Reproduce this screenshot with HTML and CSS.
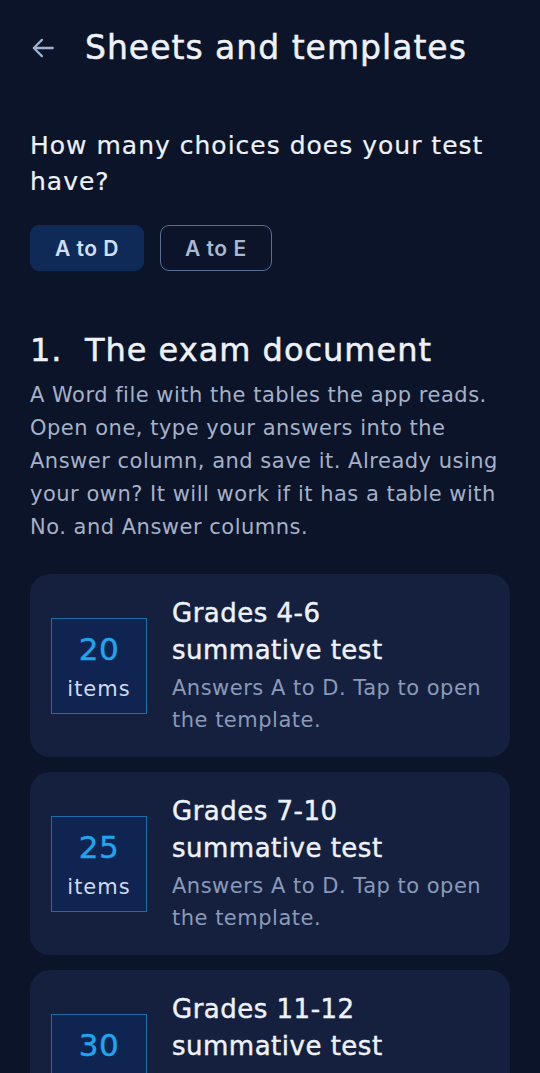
FILE: index.html
```html
<!DOCTYPE html>
<html lang="en">
<head>
<meta charset="utf-8">
<title>Sheets and templates</title>
<link rel="stylesheet" href="styles.css">
</head>
<body>
<div class="page">
  <header class="topbar">
    <svg class="back" viewBox="0 0 24 24" width="26" height="26" aria-hidden="true">
      <path d="M21 12H4M11 4.5L3.5 12 11 19.5" fill="none" stroke="currentColor" stroke-width="2.1" stroke-linecap="round" stroke-linejoin="round"/>
    </svg>
    <h1 class="title">Sheets and templates</h1>
  </header>

  <p class="question">How many choices does your test have?</p>
  <div class="choices">
    <button class="chip chip-active">A to D</button>
    <button class="chip chip-outline">A to E</button>
  </div>

  <h2 class="section">1.&nbsp; The exam document</h2>
  <p class="desc">A Word file with the tables the app reads. Open one, type your answers into the Answer column, and save it. Already using your own? It will work if it has a table with No. and Answer columns.</p>

  <div class="cards">
    <div class="card">
      <div class="badge"><span class="num">20</span><span class="unit">items</span></div>
      <div class="info">
        <div class="card-title">Grades 4-6<br>summative test</div>
        <div class="card-sub">Answers A to D. Tap to open the template.</div>
      </div>
    </div>
    <div class="card">
      <div class="badge"><span class="num">25</span><span class="unit">items</span></div>
      <div class="info">
        <div class="card-title">Grades 7-10<br>summative test</div>
        <div class="card-sub">Answers A to D. Tap to open the template.</div>
      </div>
    </div>
    <div class="card">
      <div class="badge"><span class="num">30</span><span class="unit">items</span></div>
      <div class="info">
        <div class="card-title">Grades 11-12<br>summative test</div>
        <div class="card-sub">Answers A to D. Tap to open the template.</div>
      </div>
    </div>
  </div>
</div>
</body>
</html>
```

FILE: styles.css
```css
html, body {
  margin: 0;
  padding: 0;
  background: #0b1428;
}
body {
  font-family: "DejaVu Sans", "Liberation Sans", sans-serif;
  color: #eef2f8;
  overflow: hidden;
  height: 1073px;
}
.page {
  padding: 0 30px;
}
.topbar {
  display: flex;
  align-items: center;
  height: 96px;
  gap: 29px;
}
.back {
  color: #9fb0d2;
  flex: none;
}
.title {
  margin: 0;
  font-size: 33px;
  letter-spacing: 1px;
  font-weight: 400;
  -webkit-text-stroke: 0.5px #eef2f8;
  color: #eef2f8;
  line-height: 40px;
}
.question {
  margin: 32px 0 0;
  font-size: 25px;
  letter-spacing: 1px;
  line-height: 36px;
  font-weight: 400;
  -webkit-text-stroke: 0.2px #eef2f8;
  color: #eef2f8;
}
.choices {
  display: flex;
  gap: 16px;
  margin-top: 25px;
}
.chip {
  font-family: "Inter", "Liberation Sans", sans-serif;
  font-size: 21px;
  letter-spacing: 0.5px;
  font-weight: 600;
  height: 46px;
  border-radius: 9px;
  padding: 0 24px;
  cursor: pointer;
}
.chip-active {
  background: #0f2a56;
  border: 1.5px solid #0f2a56;
  color: #cfe0f8;
}
.chip-outline {
  background: transparent;
  border: 1.5px solid #5a6d93;
  color: #aab7d0;
}
.section {
  margin: 58px 0 0;
  font-size: 32px;
  letter-spacing: 1px;
  font-weight: 400;
  -webkit-text-stroke: 0.5px #eef2f8;
  line-height: 42px;
  color: #eef2f8;
}
.desc {
  margin: 8px 0 0;
  font-size: 21px;
  letter-spacing: 0.5px;
  line-height: 33px;
  color: #a5b1c9;
}
.cards {
  display: flex;
  flex-direction: column;
  gap: 15px;
  margin-top: 30px;
}
.card {
  display: flex;
  align-items: center;
  gap: 25px;
  background: #14203d;
  border-radius: 20px;
  padding: 21px;
}
.badge {
  flex: none;
  box-sizing: border-box;
  width: 96px;
  height: 96px;
  padding-top: 4px;
  border: 1px solid #1c6ea6;
  background: #0f2450;
  display: flex;
  flex-direction: column;
  align-items: center;
  justify-content: center;
}
.num {
  font-size: 31px;
  letter-spacing: 0.5px;
  line-height: 38px;
  -webkit-text-stroke: 0.4px #1ea7f0;
  color: #1ea7f0;
}
.unit {
  margin-top: 5px;
  font-size: 21px;
  letter-spacing: 1px;
  line-height: 32px;
  color: #d0dbef;
}
.info {
  flex: 1;
}
.card-title {
  font-size: 26px;
  letter-spacing: 0.5px;
  line-height: 37px;
  -webkit-text-stroke: 0.45px #eef2f8;
  color: #eef2f8;
}
.card-sub {
  margin-top: 3px;
  font-size: 21px;
  letter-spacing: 0.5px;
  line-height: 32px;
  color: #8a9ab8;
}
```
